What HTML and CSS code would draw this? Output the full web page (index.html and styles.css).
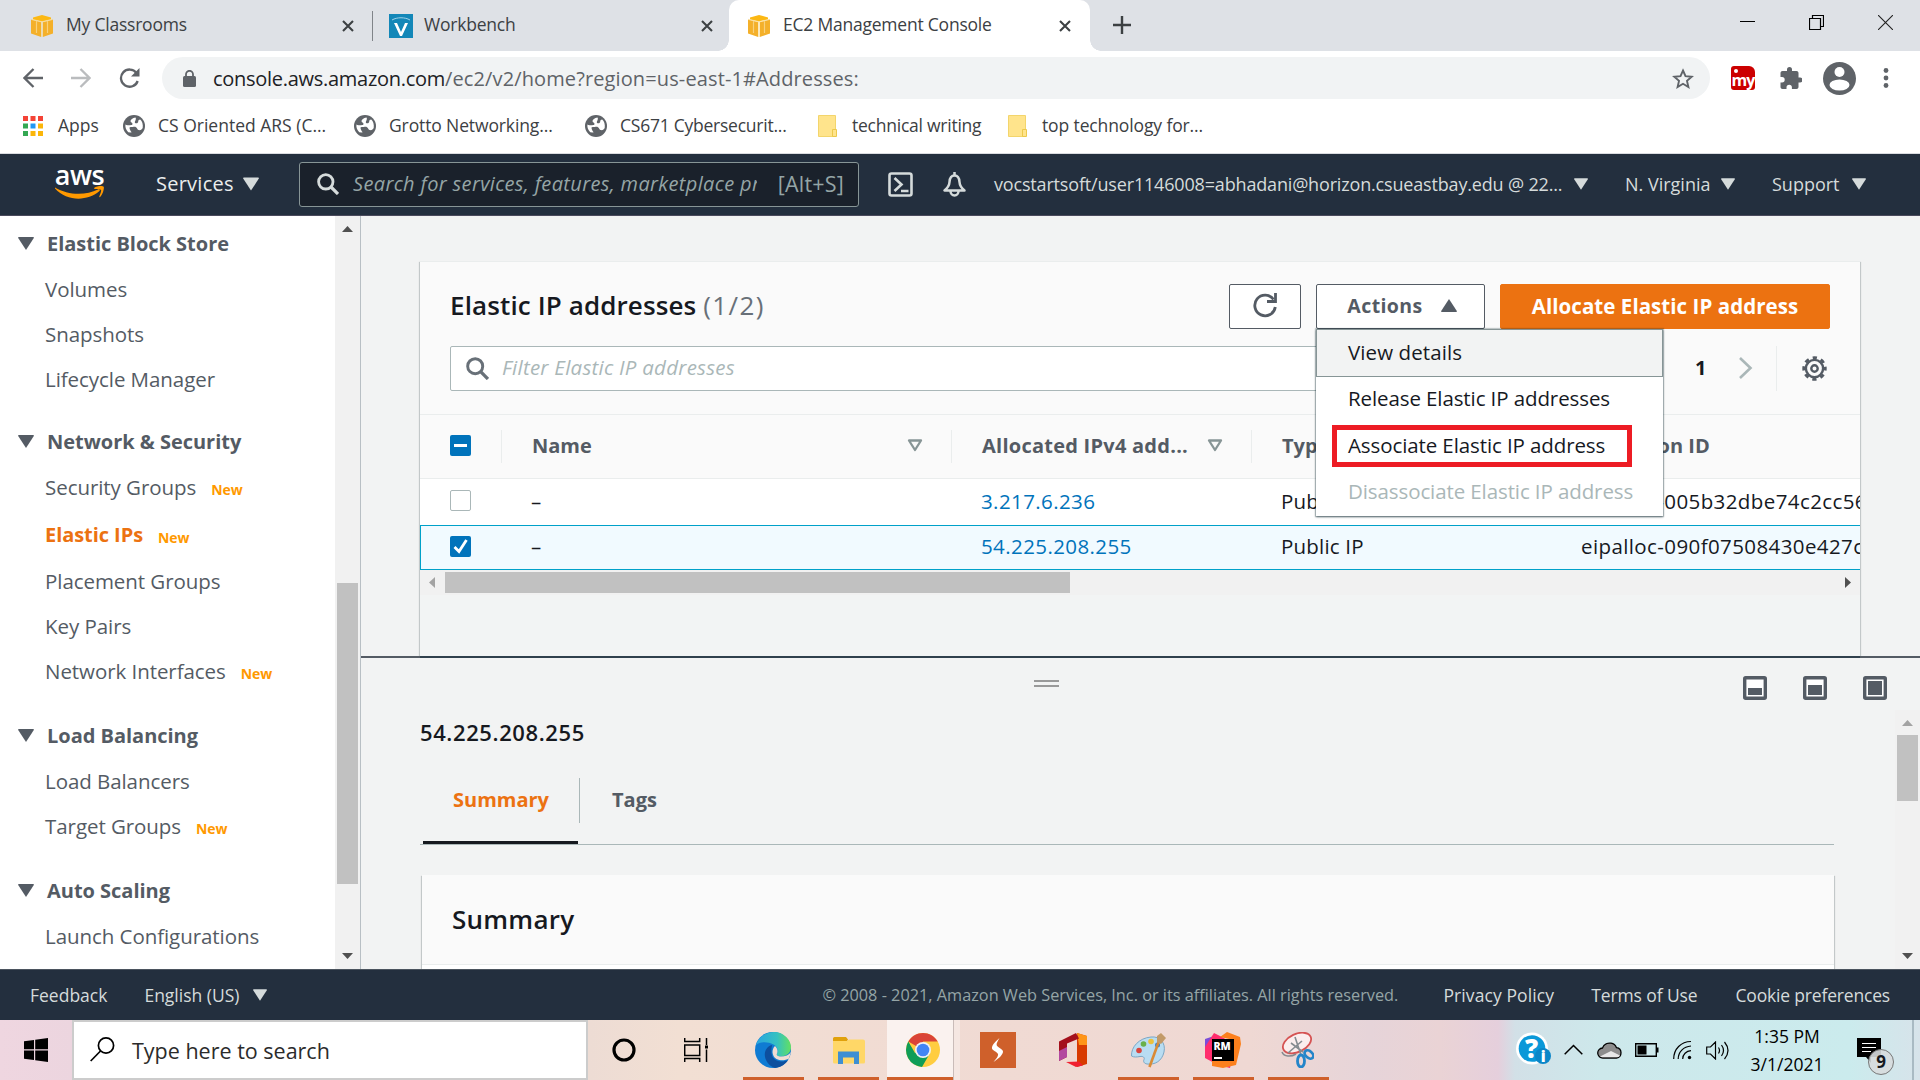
FILE: index.html
```html
<!DOCTYPE html>
<html lang="en">
<head>
<meta charset="utf-8">
<title>EC2 Management Console</title>
<link rel="stylesheet" href="styles.css">
</head>
<body>
<svg class="defs" width="0" height="0" aria-hidden="true">
  <symbol id="cube" viewBox="0 0 22 22"><path fill="#fcb813" d="M11 0l9 2.4v2L11 6.500 2 4.400v-2z"/><path fill="#f4b02a" d="M0 4.500l10.200 2.600V22L0 18.500zM22 4.500L11.800 7.100V22L22 18.500z"/><path fill="none" stroke="#fbe0a0" stroke-width="1.200" d="M.5 4.300L11 6.900l10.500-2.600M11 7v15M5.500 6v12M16.500 6v12" opacity=".7"/></symbol>
  <symbol id="x" viewBox="0 0 12 12"><path d="M1 1l10 10M11 1L1 11" stroke="#3c4043" stroke-width="2.100" fill="none"/></symbol>
  <symbol id="globe" viewBox="0 0 22 22"><circle cx="11" cy="11" r="11" fill="#5f6368"/><path fill="#fff" d="M12.500 2.500c-3 .5-5 2-5 3.500s2 1.500 2 3-2.500 1-4.500 1.200c-1 .1-2-.2-2.600-.6-.3 3 .8 5.600 2.900 7.600l2.200.3c1.500-.3 3-.8 3.500-2.200s-1-2-2.500-2.300c1-1 3-1.500 4.500-.8s1 2.300 2.500 2.800c2 .6 3.500-.5 4.200-2 .6-3.500-.5-6.500-2.500-8.400-1.200 0-2 .8-2 2s-1 2-2.500 1.700c-1.200-.3-1-1.500-.4-2.600.5-1 .9-2.200.2-3.200z"/><path fill="#5f6368" d="M6.500 12.500c2-.8 5-.5 6 1s-.5 4-2 4.500c-2 .5-4-3.500-4-5.500z"/></symbol>
  <symbol id="folder" viewBox="0 0 19 22"><path fill="#ffe48c" stroke="#f3d56c" d="M.5.500h17v21H.5z"/><path fill="#ffe48c" stroke="#ecc94b" d="M14.500 21.500v-7h4v7z"/></symbol>
  <symbol id="down" viewBox="0 0 16 13"><path fill="currentColor" d="M.6 0h14.800L16 .8 8 13 0 .8z"/></symbol>
  <symbol id="sort" viewBox="0 0 16 13"><path d="M2 1.500h12L8 11z" fill="none" stroke="#879596" stroke-width="2.300" stroke-linejoin="round"/></symbol>
  <symbol id="search" viewBox="0 0 22 22"><circle cx="8.800" cy="8.800" r="7.200" fill="none" stroke="currentColor" stroke-width="2.800"/><path d="M14 14l7 7" stroke="currentColor" stroke-width="3.200"/></symbol>
  <symbol id="arrow" viewBox="0 0 11 6"><path fill="currentColor" d="M5.500 0L11 6H0z"/></symbol>
</svg>

<div class="tabs">
  <div class="tab tab-first"><svg width="22" height="22"><use href="#cube"/></svg><span>My Classrooms</span><svg class="close" width="12" height="12"><use href="#x"/></svg></div>
  <i class="tab-sep"></i>
  <div class="tab tab-second"><svg width="24" height="24" viewBox="0 0 24 24"><path fill="#1387b8" d="M0 0h24v24H0z"/><path fill="#fff" d="M5 9h3l4 9 4-9h3l-6 13h-2z"/><path d="M3 6c5-3 13-3 18 0" fill="none" stroke="#9fd2e8"/></svg><span>Workbench</span><svg class="close" width="12" height="12"><use href="#x"/></svg></div>
  <div class="tab tab-active"><svg width="22" height="22"><use href="#cube"/></svg><span>EC2 Management Console</span><svg class="close" width="12" height="12"><use href="#x"/></svg></div>
  <svg class="plus" width="18" height="18"><path d="M9 0v18M0 9h18" stroke="#3c4043" stroke-width="2.400"/></svg>
  <div class="win">
    <svg width="15" height="15"><path d="M0 6.500h15" stroke="#000"/></svg>
    <svg width="15" height="15"><path d="M.5 3.500h11v11H.500zM3.500 3.500v-3h11v11h-3" fill="none" stroke="#000" stroke-width="1.200"/></svg>
    <svg width="15" height="15"><path d="M0 0l15 15M15 0L0 15" stroke="#222" stroke-width="1.100"/></svg>
  </div>
</div>

<div class="toolbar">
  <svg width="20" height="20" viewBox="0 0 20 20"><path d="M20 10H2M10.500 1L1.500 10l9 9" fill="none" stroke="#5f6368" stroke-width="2.300"/></svg>
  <svg width="20" height="20" viewBox="0 0 20 20"><path d="M0 10h18M9.500 1l9 9-9 9" fill="none" stroke="#babcbe" stroke-width="2.300"/></svg>
  <svg width="21" height="20" viewBox="0 0 21 20"><path d="M17.500 5A8.600 8.600 0 1 0 18.700 13" fill="none" stroke="#5f6368" stroke-width="2.300"/><path d="M20.500 0v8.500H12z" fill="#5f6368"/></svg>
  <div class="omnibox">
    <svg width="13" height="17" viewBox="0 0 13 17"><rect y="6" width="13" height="11" rx="1.500" fill="#5f6368"/><path d="M3 7V4.300a3.500 3.500 0 0 1 7 0V7" fill="none" stroke="#5f6368" stroke-width="1.800"/></svg>
    <span class="url"><b>console.aws.amazon.com</b>/ec2/v2/home?region=us-east-1#Addresses:</span>
    <svg class="star" width="22" height="21" viewBox="0 0 22 21"><path d="M11 2.500l2.500 5.700 6.200.6-4.700 4.100 1.400 6.100L11 15.800 5.600 19 7 12.900 2.300 8.800l6.200-.6z" fill="none" stroke="#5f6368" stroke-width="1.900"/></svg>
  </div>
  <div class="ext"><i></i>my</div>
  <svg class="puzzle" width="22" height="22" viewBox="0 0 22 22"><path fill="#5f6368" d="M20 10.500h-1.500V6c0-1.100-.9-2-2-2H12V2.500a2.500 2.500 0 0 0-5 0V4H2.500c-1.100 0-2 .9-2 2v4H2a2.700 2.700 0 0 1 0 5.400H.500V20c0 1.100.9 2 2 2h4v-1.500a2.700 2.700 0 0 1 5.400 0V22h4.600c1.100 0 2-.9 2-2v-4.500H20a2.500 2.500 0 0 0 0-5z"/></svg>
  <svg class="me" width="33" height="33" viewBox="0 0 33 33"><circle cx="16.500" cy="16.500" r="16.500" fill="#5f6368"/><circle cx="16.500" cy="10" r="5" fill="#fff"/><ellipse cx="16.500" cy="23" rx="10" ry="5.500" fill="#fff"/></svg>
  <svg class="dots" width="6" height="20" fill="#5f6368"><circle cx="3" cy="2.500" r="2.400"/><circle cx="3" cy="10" r="2.400"/><circle cx="3" cy="17.500" r="2.400"/></svg>
</div>

<div class="bookmarks">
  <svg width="20" height="20"><path fill="#f44336" d="M0 0h5v5H0zM7.500 0h5v5h-5zM15 0h5v5h-5z"/><path fill="#34a853" d="M0 7.500h5v5H0zM0 15h5v5H0z"/><path fill="#2196f3" d="M7.500 7.500h5v5h-5z"/><path fill="#fbb60a" d="M15 7.500h5v5h-5zM7.500 15h5v5h-5zM15 15h5v5h-5z"/></svg><span>Apps</span>
  <svg width="22" height="22"><use href="#globe"/></svg><span>CS Oriented ARS (C...</span>
  <svg width="22" height="22"><use href="#globe"/></svg><span class="snug">Grotto Networking...</span>
  <svg width="22" height="22"><use href="#globe"/></svg><span class="tight">CS671 Cybersecurit...</span>
  <svg width="19" height="22"><use href="#folder"/></svg><span class="tight">technical writing</span>
  <svg width="19" height="22"><use href="#folder"/></svg><span class="snug">top technology for...</span>
</div>

<header class="aws">
  <div class="logo"><span>aws</span><svg width="49" height="14" viewBox="0 0 49 14"><path d="M0 1.500C13 9.500 31 9.500 43 3.500c1.500-.6 2.500.8 1.200 1.800C32 15.500 12 15.500 0 2.500z" fill="#ff9900"/><path d="M39 2c3-2.300 9-2.400 9.700-1.300S48 8.500 45 11c-.6.400-1 .1-.7-.5 1-2.300 2.300-5.600 1.700-6.600S41.500 2.900 39.500 3z" fill="#ff9900"/></svg></div>
  <span class="services">Services</span><svg class="tri" width="16" height="14"><use href="#down"/></svg>
  <div class="finder"><svg width="22" height="22"><use href="#search"/></svg><em>Search for services, features, marketplace products, and docs</em><kbd>[Alt+S]</kbd></div>
  <svg class="shell" width="25" height="25" viewBox="0 0 25 25" fill="none" stroke="#d5dbdb" stroke-width="2.600"><rect x="1.500" y="1.500" width="22" height="22" rx="2"/><path d="M6.500 6l7 6.500-7 6.500M13 19h7.500"/></svg>
  <svg class="bell" width="25" height="25" viewBox="0 0 25 25"><path d="M12.500 3.500c-4 0-4.800 3.500-5 6.500-.2 3.500-1.300 5.500-5 8.500h20c-3.700-3-4.800-5-5-8.500-.2-3-1-6.500-5-6.500z" fill="none" stroke="#d5dbdb" stroke-width="2.500" stroke-linejoin="round"/><path d="M12.500 0v4M8.500 19a4 4.500 0 0 0 8 0" fill="none" stroke="#d5dbdb" stroke-width="2.500"/></svg>
  <span class="user">vocstartsoft/user1146008=abhadani@horizon.csueastbay.edu @ 22...</span><svg class="tri" width="14" height="12"><use href="#down"/></svg>
  <span class="region">N. Virginia</span><svg class="tri" width="14" height="12"><use href="#down"/></svg>
  <span class="support">Support</span><svg class="tri" width="14" height="12"><use href="#down"/></svg>
</header>

<div class="console">
  <nav class="side">
    <section><h3><svg width="16" height="13"><use href="#down"/></svg>Elastic Block Store</h3><a>Volumes</a><a>Snapshots</a><a>Lifecycle Manager</a></section>
    <section><h3><svg width="16" height="13"><use href="#down"/></svg>Network &amp; Security</h3><a class="tall">Security Groups <small>New</small></a><a class="tall current">Elastic IPs <small>New</small></a><a>Placement Groups</a><a>Key Pairs</a><a>Network Interfaces <small>New</small></a></section>
    <section><h3><svg width="16" height="13"><use href="#down"/></svg>Load Balancing</h3><a>Load Balancers</a><a>Target Groups <small>New</small></a></section>
    <section><h3><svg width="16" height="13"><use href="#down"/></svg>Auto Scaling</h3><a>Launch Configurations</a></section>
  </nav>
  <div class="vbar side-bar"><svg width="11" height="6"><use href="#arrow"/></svg><i></i><svg class="flip" width="11" height="6"><use href="#arrow"/></svg></div>

  <main>
    <div class="list-pane">
      <div class="card">
        <div class="card-head">
          <div class="title-row">
            <h1>Elastic IP addresses <span>(1/2)</span></h1>
            <button class="btn refresh"><svg width="26" height="26" viewBox="0 0 26 26"><path d="M21.500 6.500A10.300 10.300 0 1 0 23.300 14" fill="none" stroke="#545b64" stroke-width="2.800"/><path d="M23.500 0v8.500H15" fill="none" stroke="#545b64" stroke-width="2.800"/></svg></button>
            <div class="actions">
              <button class="btn">Actions<svg class="flip" width="16" height="13"><use href="#down"/></svg></button>
              <div class="menu"><a class="hot">View details</a><a>Release Elastic IP addresses</a><a>Associate Elastic IP address</a><a class="off">Disassociate Elastic IP address</a><i class="marker"></i></div>
            </div>
            <button class="btn primary">Allocate Elastic IP address</button>
          </div>
          <div class="filter-row">
            <div class="filter"><svg width="23" height="23"><use href="#search"/></svg><em>Filter Elastic IP addresses</em></div>
            <b>1</b>
            <svg class="next" width="15" height="24"><path d="M2 2l10.500 10L2 22" fill="none" stroke="#aab7b8" stroke-width="2.600"/></svg>
            <i></i>
            <svg class="gear" width="25" height="25" viewBox="0 0 25 25" fill="none" stroke="#545b64"><circle cx="12.500" cy="12.500" r="8.600" stroke-width="2.400"/><circle cx="12.500" cy="12.500" r="10.800" stroke-width="2.800" stroke-dasharray="4.300 4.180" stroke-dashoffset="2.150"/><circle cx="12.500" cy="12.500" r="3.200" stroke-width="2.400"/></svg>
          </div>
        </div>
        <div class="table">
          <div class="row thead">
            <div><span class="check on"><svg width="21" height="21"><path d="M4 10.500h13" stroke="#fff" stroke-width="3"/></svg></span></div>
            <div>Name<svg width="16" height="13"><use href="#sort"/></svg></div>
            <div class="wide">Allocated IPv4 add...<svg width="16" height="13"><use href="#sort"/></svg></div>
            <div>Type</div>
            <div>Allocation ID</div>
          </div>
          <div class="row">
            <div><span class="check"></span></div><div>–</div><div><a>3.217.6.236</a></div><div class="kind">Public IP</div><div>eipalloc-005b32dbe74c2cc56</div>
          </div>
          <div class="row picked">
            <div><span class="check on"><svg width="21" height="21"><path d="M4.500 11l4.500 4.500L16.500 4" fill="none" stroke="#fff" stroke-width="2.800"/></svg></span></div><div>–</div><div><a>54.225.208.255</a></div><div class="kind">Public IP</div><div>eipalloc-090f07508430e427c</div>
          </div>
        </div>
        <div class="hbar"><svg width="6" height="11"><path fill="#a3a3a3" d="M6 0v11L0 5.500z"/></svg><i></i><svg class="right" width="6" height="11"><path fill="#505050" d="M0 0v11l6-5.500z"/></svg></div>
      </div>
    </div>

    <div class="split">
      <div class="split-tools">
        <span class="grip"></span>
        <svg width="24" height="24"><rect x="1.700" y="1.700" width="20.600" height="20.600" rx="1" fill="#fff" stroke="#545b64" stroke-width="3.400"/><path fill="#545b64" d="M5 12h14v7H5z"/></svg>
        <svg width="24" height="24"><rect x="1.700" y="1.700" width="20.600" height="20.600" rx="1" fill="#fff" stroke="#545b64" stroke-width="3.400"/><path fill="#545b64" d="M5 9h14v10H5z"/></svg>
        <svg width="24" height="24"><rect x="1.700" y="1.700" width="20.600" height="20.600" rx="1" fill="#fff" stroke="#545b64" stroke-width="3.400"/><path fill="#545b64" d="M5 5h14v14H5z"/></svg>
      </div>
      <div class="split-body">
        <div class="detail">
          <h2>54.225.208.255</h2>
          <div class="subtabs"><a class="current">Summary</a><i></i><a>Tags</a></div>
          <div class="summary"><h2>Summary</h2></div>
        </div>
        <div class="vbar detail-bar"><svg width="11" height="6"><use href="#arrow"/></svg><i></i><svg class="flip" width="11" height="6"><use href="#arrow"/></svg></div>
      </div>
    </div>
  </main>
</div>

<footer>
  <span>Feedback</span><span class="lang">English (US)</span><svg class="tri" width="14" height="12"><use href="#down"/></svg>
  <span class="copy">© 2008 - 2021, Amazon Web Services, Inc. or its affiliates. All rights reserved.</span>
  <span class="privacy">Privacy Policy</span><span class="terms">Terms of Use</span><span class="cookies">Cookie preferences</span>
</footer>

<div class="taskbar">
  <div class="start"><svg width="24" height="24"><path d="M0 3.300l10-1.400v9.400H0zM11.200 1.700L24 0v11.300H11.200zM0 12.500h10v9.600L0 20.700zM11.200 12.500H24V24l-12.800-1.800z"/></svg></div>
  <div class="winsearch"><svg width="25" height="25" fill="none" stroke="#000" stroke-width="1.700"><circle cx="16" cy="8.500" r="7.600"/><path d="M10.500 14L.7 24"/></svg>Type here to search</div>
  <div class="app bare"><svg width="24" height="24"><circle cx="12" cy="12" r="10" fill="none" stroke="#000" stroke-width="3.200"/></svg></div>
  <div class="app view"><svg width="24" height="24" fill="none" stroke="#000" stroke-width="1.500"><path d="M.7 0v3.500h15V0M.7 7h15v10.500H.7zM.7 24v-3.500h15V24M22.500 0v7M22.500 11.500V24"/><path fill="#000" stroke="none" d="M21 7.500h3v3h-3z"/></svg></div>
  <div class="app open edge"><svg width="36" height="36" viewBox="0 0 36 36"><defs><linearGradient id="e1" x1="0" x2="1"><stop offset="0" stop-color="#2aa5e0"/><stop offset=".6" stop-color="#35c1c1"/><stop offset="1" stop-color="#63e061"/></linearGradient></defs><circle cx="18" cy="18" r="18" fill="#0f7bd3"/><path d="M1 13C4 3 13 0 19 0c10 0 17 8 17 15 0 6-5 9.500-10 9.500-3 0-5-1-4-3 1.200-1.500 1.300-6-3.500-9C12 9 4 10 1 13z" fill="url(#e1)"/><path d="M17 13c-5 1-8 6-7 12 1 5 5 9.500 10 10.900 6-.4 11-4 13-7.900-5 2.500-12 2-15-2.500-2.500-4-1.500-9-1-12.500z" fill="#0d4f9e"/><path d="M20 14c-3.500 3-3.500 10 1.500 13 4 2 9 1.500 12.500-.5L36 20c-2 3-6 4.500-10 4.500-3 0-5-1-4-3 1-1.700.7-5-2-7.500z" fill="#f0dcd3"/></svg></div>
  <div class="app open files"><svg width="32" height="27" viewBox="0 0 32 27"><path fill="#e0a10c" d="M0 1.500Q0 0 1.500 0H13l2 2.500L13 6H0z"/><path fill="#ffd767" d="M0 4h14l2-1.500h14q2 0 2 2V25q0 1.500-1.500 1.500h-29Q0 26.500 0 25z"/><path fill="#3f8fd2" d="M5 14.500h21V27h-5v-6.500H10V27H5z"/></svg></div>
  <div class="app open chrome"><svg width="34" height="34" viewBox="0 0 34 34"><circle cx="17" cy="17" r="17" fill="#ffcd40"/><path fill="#da4437" d="M17 17L2.300 8.500A17 17 0 0 1 31.700 8.500H17z"/><path fill="#0f9d58" d="M2.300 8.500A17 17 0 0 0 16 34l7.500-13L17 17 9 20z"/><circle cx="17" cy="17" r="8" fill="#f1f1f1"/><circle cx="17" cy="17" r="6.300" fill="#4285f4"/></svg></div>
  <div class="app swift"><svg width="36" height="36"><path fill="#cf602b" d="M0 0h36v36H0z"/><path fill="#fff" d="M19.500 6C14 10.500 11.500 14 12 16.500c.6 2.200 5 3 6 5.500.5 2-1.500 4.500-4.500 8 6-4 9.500-7.500 9.500-10.500-.3-3-5.500-3.800-6.300-6.300-.5-1.700 1-4 2.800-7.200z"/></svg></div>
  <div class="app office"><svg width="28" height="34" viewBox="0 0 28 34"><path fill="#d83b01" d="M18 0l10 3v28l-10 3z"/><path fill="#ff9518" d="M18 0l10 3v9h-8z"/><path fill="#a4101c" d="M0 8.500L17 0l3 5.500-12 5V24l-8 4z"/><path fill="#b3489f" d="M0 18l8-4v10l-8 4z"/><path fill="#f0202f" d="M7 29l13-.5 4 4L17 34z"/></svg></div>
  <div class="app open paint"><svg width="36" height="36" viewBox="0 0 36 36"><path d="M20 5C29 4 35 11 33 20c-2 9-9 13-17 12-3-.5-4-2.500-3-4.500s-1-3.500-4-3-6 1-8.500-.5C0 15 8 6 20 5z" fill="#b9ddf2" stroke="#7ba7c5"/><circle cx="8" cy="18.500" r="2.800" fill="#d9443c"/><circle cx="12.500" cy="12" r="2.800" fill="#69b04a"/><circle cx="20" cy="9.500" r="2.800" fill="#ebc13d"/><circle cx="26.500" cy="13" r="2.500" fill="#3b83c6"/><path d="M28 9L18.500 35" stroke="#d98b36" stroke-width="2.600"/><path d="M26 4l4-3 5 5-5 6-4-2z" fill="#c29a68"/></svg></div>
  <div class="app open rubymine"><svg width="36" height="36" viewBox="0 0 36 36"><path fill="#7b4dd9" d="M0 7l12-4 8 10L0 24z"/><path fill="#ff2d6d" d="M9 1l10 5 10 10-4 20-12-3L0 26V15z"/><path fill="#fc801d" d="M15 5l7-5 13 5 1 7-5 21-13 3-11-2V28h21L29 8z"/><path d="M7 7h22v22H7z"/><path fill="#fff" d="M9 25h8v2H9z"/><text x="8.500" y="17.500" font-family="Open Sans" font-weight="800" font-size="10.500" fill="#fff">RM</text></svg></div>
  <div class="app open snip"><svg width="34" height="36" viewBox="0 0 34 36"><ellipse cx="17" cy="11" rx="15" ry="9" transform="rotate(-25 17 11)" fill="#fbeeee" stroke="#d55353" stroke-width="1.800"/><path d="M2 20c2 5 9 5 14 2M15 5l6 18M11 11l12 9M8 21l14-12" stroke="#858b90" stroke-width="1.600" fill="none"/><ellipse cx="21" cy="29" rx="3.500" ry="6" fill="none" stroke="#2485c9" stroke-width="2.800"/><ellipse cx="29" cy="22.500" rx="3.300" ry="5" transform="rotate(-50 29 22.500)" fill="none" stroke="#2485c9" stroke-width="2.800"/></svg></div>
  <div class="tray">
    <svg class="help" width="35" height="34" viewBox="0 0 35 34"><circle cx="16" cy="16.500" r="16" fill="#fff"/><circle cx="16" cy="16.500" r="13.300" fill="#0a98d8"/><text x="9" y="26" font-family="Open Sans" font-weight="800" font-size="26" fill="#fff">?</text><circle cx="27" cy="24" r="8" fill="#0b86c8"/><text x="24.700" y="29.500" font-family="Open Sans" font-weight="800" font-size="15" fill="#fff">i</text></svg>
    <svg class="chev" width="19" height="11"><path d="M.7 10.300L9.500 1.500l8.800 8.800" fill="none" stroke="#000" stroke-width="1.500"/></svg>
    <svg class="cloud" width="25" height="17"><path d="M6 16a5 5 0 0 1-.5-10C7 2 11 .7 14 1.200c3 .5 4.500 2 5.500 4.500 6 .8 6 9.500 0 10.300z" fill="#8d8d8d" stroke="#000" stroke-width="1.300"/><path d="M3 14.500l11-5.500 9 4.500c-1 1.500-2 1.800-3.500 1.800H6c-1.500 0-2.300-.3-3-.8z" fill="#e8e8e8"/></svg>
    <svg class="batt" width="24" height="14"><path d="M.7.700h20.600v12.600H.7z" fill="none" stroke="#000" stroke-width="1.400"/><path d="M2.500 2.500h9v9h-9zM22 4.500h1.500v5H22z"/></svg>
    <svg class="wifi" width="19" height="20" fill="none" stroke="#000" stroke-width="1.200"><path d="M.7 19C.7 9 8 1.500 18 1.500M5.200 19C5.200 12 10.500 6.500 18 6M9.700 19c0-4.500 3.500-8 8.300-8.300"/><circle cx="16.500" cy="17.500" r="1.700" fill="#000" stroke="none"/></svg>
    <svg class="vol" width="23" height="19" fill="none" stroke="#000" stroke-width="1.200"><path d="M.7 6h3.800l5-5v17l-5-5H.700zM12.500 6.500q2 3 0 6M15.500 4q4 5.500 0 11M18.500 1q7 8.500 0 17"/></svg>
    <div class="clock"><span>1:35 PM</span><span>3/1/2021</span></div>
    <div class="note"><svg width="24" height="25"><path d="M0 0h24v19H14v6l-5-6H0z"/><path d="M5 5.500h14M5 9.500h14M5 13.500h9" stroke="#fff" stroke-width="1.200"/></svg><b>9</b></div>
    <i></i>
  </div>
</div>
</body>
</html>
```
FILE: styles.css
```css
* { box-sizing: border-box; }
body { margin: 0; width: 1920px; height: 1080px; overflow: hidden; background: #fff; color: #16191f; font: 20.5px "Open Sans", "Noto Sans", sans-serif; white-space: nowrap; }
svg { display: block; flex: none; }
i { display: block; flex: none; }
h1, h2, h3 { margin: 0; }
.defs { position: absolute; }
.flip { transform: rotate(180deg); }

/* Browser chrome */
.tabs { display: flex; align-items: center; height: 51px; background: #dee1e6; font-size: 17.5px; letter-spacing: -.22px; color: #3c4043; }
.tab { display: flex; align-items: center; height: 51px; gap: 13px; }
.tab span { padding-bottom: 3px; }
.tab .close { margin-left: auto; }
.tab-first { width: 372px; padding: 0 18px 0 31px; }
.tab-sep { width: 1px; height: 30px; background: #808489; }
.tab-second { width: 356px; padding: 0 16px; gap: 11px; }
.tab-active { width: 361px; padding: 0 19px; background: #fff; border-radius: 10px 10px 0 0; position: relative; }
.tab-active::before, .tab-active::after { content: ""; position: absolute; bottom: 0; width: 11px; height: 11px; }
.tab-active::before { left: -11px; background: radial-gradient(circle at 0 0, #dee1e6 10.5px, #fff 11px); }
.tab-active::after { right: -11px; background: radial-gradient(circle at 100% 0, #dee1e6 10.5px, #fff 11px); }
.plus { margin: 0 0 2px 23px; }
.win { display: flex; gap: 54px; margin: -7px 27px 0 auto; }

.toolbar { display: flex; align-items: center; height: 54px; padding: 0 31px 0 23px; }
.toolbar > svg:nth-child(2) { margin-left: 28px; }
.toolbar > svg:nth-child(3) { margin-left: 28px; }
.omnibox { display: flex; align-items: center; width: 1548px; height: 42px; margin-left: 22px; padding: 0 16px 0 21px; border-radius: 21px; background: #f1f3f4; font-size: 20px; color: #5f6368; }
.url { margin-left: 17px; letter-spacing: .12px; }
.url b { font-weight: 400; color: #202124; letter-spacing: -.28px; }
.star { margin-left: auto; }
.ext { position: relative; width: 24px; height: 24px; margin-left: 21px; border-radius: 3px 6px 3px 3px; background: #c00; color: #fff; font: bold 16px/28px "Open Sans", sans-serif; letter-spacing: -1px; text-align: center; }
.ext i { position: absolute; left: 3px; top: 3px; width: 4px; height: 4px; border-radius: 50%; background: #fff; }
.puzzle { margin-left: 25px; }
.me { margin-left: 21px; }
.dots { margin-left: auto; }

.bookmarks { display: grid; grid-template-columns: 34px 66px 34px 197px 34px 197px 34px 199px 33px 157px 33px auto; align-items: center; height: 49px; padding: 0 0 7px 23px; border-bottom: 1px solid #dadce0; font-size: 17.5px; color: #3c4043; }
.bookmarks span { padding: 0 0 1px 1px; }
.bookmarks .snug { letter-spacing: -.12px; }
.bookmarks .tight { letter-spacing: -.24px; }

/* AWS header */
.aws { display: flex; align-items: center; height: 62px; background: #232f3e; color: #d5dbdb; font-size: 18px; border-bottom: 1px solid #4a4a5c; }
.aws > span { padding-bottom: 2px; }
.aws .tri { margin-bottom: 2px; }
.logo { display: flex; flex-direction: column; align-items: center; width: 49px; height: 34px; margin: -3px 0 0 55px; }
.logo span { height: 21px; font: 600 27px/17px "Open Sans", sans-serif; letter-spacing: -.5px; color: #fff; }
.services { margin-left: 52px; width: 87px; font-size: 20px; letter-spacing: .25px; color: #eaeded; }
.finder { display: flex; align-items: center; width: 560px; height: 45px; margin-left: 40px; padding: 0 14px 1px 17px; border: 1px solid #879596; border-radius: 3px; background: #1a212b; font-size: 20px; }
.finder em { width: 404px; margin-left: 14px; padding-bottom: 1px; overflow: hidden; letter-spacing: .36px; color: #95a5a6; }
.finder kbd { margin-left: auto; padding-bottom: 1px; font: 21.5px "Open Sans", sans-serif; color: #95a5a6; letter-spacing: .2px; }
.shell { margin-left: 29px; }
.bell { margin-left: 29px; }
.user { margin-left: 27px; width: 580px; letter-spacing: -.17px; }
.region { margin-left: 37px; width: 96px; }
.support { margin-left: 37px; width: 80px; }

/* Console */
.console { display: flex; height: 753px; }
.side { width: 335px; padding: 4px 0 0 45px; overflow: hidden; color: #545b64; }
.side section { margin-bottom: 19px; }
.side section:first-child { margin-bottom: 17px; }
.side h3 { display: flex; align-items: center; gap: 13px; height: 46px; margin-left: -27px; font-size: 20px; font-weight: 700; letter-spacing: -.02px; }
.side a { display: flex; align-items: center; height: 45px; letter-spacing: -.06px; }
.side a.tall { height: 47px; padding-bottom: 2px; }
.side a.current { padding-bottom: 0; color: #ec7211; font-weight: 700; font-size: 20px; }
.side small { margin: 5px 0 0 15px; font-size: 14px; font-weight: 700; color: #ff9900; letter-spacing: -.1px; }
.vbar { display: flex; flex-direction: column; align-items: center; width: 25px; background: #f1f1f1; color: #505050; }
.vbar .flip { margin: auto 0 10px; }
.vbar i { width: 21px; background: #c1c1c1; }
.side-bar { padding-top: 10px; }
.side-bar i { height: 301px; margin-top: 351px; }

main { flex: 1; min-width: 0; display: flex; flex-direction: column; background: #f2f3f3; border-left: 1px solid #b8bfc4; }
.list-pane { height: 440px; padding: 45px 60px 0 59px; }
.card { height: 395px; border-top: 1px solid #eaeded; background: #f2f4f4; box-shadow: 0 1px 1px rgba(0,28,36,.3), 1px 1px 1px rgba(0,28,36,.15), -1px 1px 1px rgba(0,28,36,.15); }
.card-head { padding: 22px 30px 23px; background: #fafafa; border-bottom: 1px solid #eaeded; }
.title-row { display: flex; height: 45px; }
.title-row h1 { flex: 1; font-size: 26px; line-height: 43px; font-weight: 600; letter-spacing: .12px; }
.title-row h1 span { font-weight: 400; color: #687078; letter-spacing: 1.4px; }
.btn { display: flex; align-items: center; justify-content: center; height: 45px; padding: 0 0 2px; border: 1px solid #545b64; border-radius: 2px; background: #fff; color: #545b64; font: 700 19.5px "Open Sans", sans-serif; letter-spacing: .4px; }
.refresh { width: 72px; margin-right: 15px; }
.actions { position: relative; margin-right: 15px; }
.actions .btn { width: 169px; gap: 18px; padding-left: 3px; }
.primary { width: 330px; border-color: #ec7211; background: #ec7211; color: #fff; font-size: 20.5px; letter-spacing: .05px; }
.menu { position: absolute; z-index: 2; left: 0; top: 45px; width: 347px; height: 187px; background: #fff; box-shadow: 0 1px 2px rgba(0,28,36,.6), 0 0 1px 1px rgba(0,28,36,.2); letter-spacing: -.1px; }
.menu a { display: flex; align-items: center; height: 46.3px; padding: 0 0 3px 32px; }
.menu .hot { height: 48px; padding: 0 0 2px 31px; background: #f2f3f3; border: 1px solid #879596; letter-spacing: .1px; }
.menu .hot + a { padding-bottom: 4px; }
.menu .off { color: #aab7b8; }
.marker { position: absolute; left: 16px; top: 96px; width: 300px; height: 42px; border: 5px solid #ed1c24; }
.filter-row { display: flex; align-items: center; height: 45px; margin-top: 17px; }
.filter { display: flex; align-items: center; width: 1150px; height: 45px; padding: 0 0 1px 15px; gap: 13px; border: 1px solid #aab7b8; border-radius: 2px; background: #fff; color: #687078; }
.filter em { padding-bottom: 2px; font-size: 20.5px; letter-spacing: .25px; color: #aab7b8; }
.filter-row b { margin-left: 95px; width: 43px; padding-bottom: 2px; font-size: 20px; }
.filter-row .next { margin-bottom: 2px; }
.filter-row i { margin-left: 23px; width: 1px; height: 45px; background: #eaeded; }
.gear { margin: 0 0 1px 25px; }
.table { overflow: hidden; }
.row { display: grid; grid-template-columns: 81px 450px 300px 300px 309px; height: 46px; background: #fff; letter-spacing: .4px; }
.row > div { display: flex; align-items: center; padding: 0 0 3px 30px; overflow: hidden; }
.row > .kind { letter-spacing: .2px; }
.row a { color: #0073bb; }
.row.thead { height: 64px; background: #fafafa; border-bottom: 1px solid #eaeded; color: #545b64; font-size: 20px; font-weight: 700; letter-spacing: 0; }
.row.thead > div { padding: 0 28px 2px 30px; justify-content: space-between; }
.row.thead > div + div { background: linear-gradient(#eaeded, #eaeded) 0 15px / 1px 33px no-repeat; padding-left: 31px; }
.row.thead > .wide { letter-spacing: .25px; }
.row.picked { height: 45px; background: #f1faff; border: 1px solid #00a1c9; border-right: 0; grid-template-columns: 80px 450px 300px 300px 309px; }
.row.picked > div:first-child { padding-left: 29px; }
.check { width: 21px; height: 21px; border: 1px solid #aab7b8; border-radius: 2px; background: #fff; }
.check.on { border: 0; background: #0073bb; }
.hbar { display: flex; align-items: center; height: 25px; padding: 0 9px; background: #f1f1f1; }
.hbar i { width: 625px; height: 21px; margin-left: 10px; background: #c1c1c1; }
.hbar .right { margin-left: auto; }

.split { flex: 1; display: flex; flex-direction: column; background: linear-gradient(90deg, #545b64 59px, #30414d 59px 1499px, #545b64 1499px) 0 0 / 100% 2px no-repeat #f2f3f3; }
.split-tools { display: flex; align-items: center; height: 54px; padding: 10px 33px 0 673px; gap: 36px; }
.grip { width: 25px; height: 7px; margin: -10px auto 0 0; border: solid #999; border-width: 2px 0; }
.split-body { flex: 1; display: flex; }
.detail { width: 1534px; padding: 0 61px 0 59px; height: 259px; overflow: hidden; }
.detail > h2 { margin-bottom: 2px; font-size: 22px; line-height: 44px; letter-spacing: .6px; font-weight: 600; }
.subtabs { display: flex; align-items: center; height: 89px; padding-left: 3px; border-bottom: 1px solid #aab7b8; }
.subtabs a { height: 88px; line-height: 88px; margin-left: 32px; font-size: 20px; font-weight: 700; color: #545b64; }
.subtabs .current { width: 155px; margin-left: 0; padding-left: 30px; color: #ec7211; border-bottom: 3px solid #16191f; }
.subtabs i { width: 1px; height: 45px; margin-left: 1px; background: #aab7b8; }
.summary { height: 110px; margin: 30px 0 0 2px; background: linear-gradient(#fafafa 89px, #eaeded 89px 90px, #fff 90px); box-shadow: 0 1px 1px rgba(0,28,36,.3), 1px 1px 1px rgba(0,28,36,.15), -1px 1px 1px rgba(0,28,36,.15); }
.summary h2 { padding-left: 30px; font-size: 26px; line-height: 88px; font-weight: 600; letter-spacing: .25px; }
.detail-bar { padding-top: 10px; }
.detail-bar svg:first-child { color: #a3a3a3; }
.detail-bar i { height: 66px; margin-top: 9px; }

footer { display: flex; align-items: center; height: 51px; padding-left: 30px; background: #232f3e; border-top: 1px solid #4b545e; color: #d5dbdb; font-size: 17.5px; }
footer .lang { margin-left: 37px; width: 109px; }
footer .copy { margin-left: 555px; padding-bottom: 1px; font-size: 16.3px; color: #95a5a6; }
footer .privacy { margin-left: auto; letter-spacing: .1px; }
footer .terms { margin-left: 37px; letter-spacing: -.1px; }
footer .cookies { margin: 0 30px 0 38px; letter-spacing: -.18px; }

/* Taskbar */
.taskbar { display: flex; height: 60px; background: linear-gradient(90deg, #efd6e0 0, #ecd5df 72px, #eddcd4 590px, #f2dfd3 680px, #f0dad3 1000px, #efd8d3 1250px, #e6d4d9 1370px, #ead3d5 1440px, #e5cfdc 1498px, #d2e0e7 1515px, #cde8eb 1600px, #cbebed 1850px, #d7e3ea 1920px); }
.start { width: 72px; padding: 18px 0 0 24px; }
.winsearch { display: flex; align-items: center; gap: 17px; width: 516px; padding: 2px 0 0 16px; border: 2px solid #ccc; background: #fff; color: #2b2b2b; font-size: 21.5px; line-height: 60px; }
.winsearch svg { margin-top: -4px; }
.app { display: flex; align-items: center; justify-content: center; height: 60px; width: 61px; }
.app.open { border-bottom: 3px solid #cf602b; padding-top: 3px; }
.bare { width: 24px; margin-left: 24px; }
.view { width: 24px; margin: 0 35px 0 48px; }
.app.edge { padding-right: 2px; }
.files { margin-left: 14px; }
.app.chrome { width: 66px; margin-left: 8px; padding-left: 5px; background: #faf2ef; box-shadow: 1px 0 #c9bcb9, 7px 0 #f5e7e2; }
.swift { width: 36px; margin-left: 27px; }
.office { width: 28px; margin: 0 31px 0 43px; }
.rubymine, .snip { margin-left: 14px; }
.app.rubymine { padding-right: 1px; }
.app.snip { padding-right: 3px; }
.tray { display: flex; align-items: center; margin-left: 187px; flex: 1; }
.help { margin-bottom: 2px; }
.chev { margin: 0 0 2px 13px; }
.cloud { margin-left: 14px; }
.batt { margin-left: 13px; }
.wifi { margin-left: 14px; }
.vol { margin-left: 14px; }
.clock { display: flex; flex-direction: column; align-items: center; width: 84px; margin: -1px 0 0 16px; font-size: 17.5px; line-height: 28px; color: #000; }
.clock span { height: 28px; }
.note { position: relative; margin-left: 28px; }
.note b { position: absolute; left: 11px; top: 11px; width: 26px; height: 26px; border: 1px solid #777; border-radius: 50%; background: rgba(215,220,222,.9); font-size: 17px; line-height: 24px; text-align: center; }
.tray > i { width: 2px; height: 60px; margin: 0 6px 0 auto; background: #a9bac3; }
```
